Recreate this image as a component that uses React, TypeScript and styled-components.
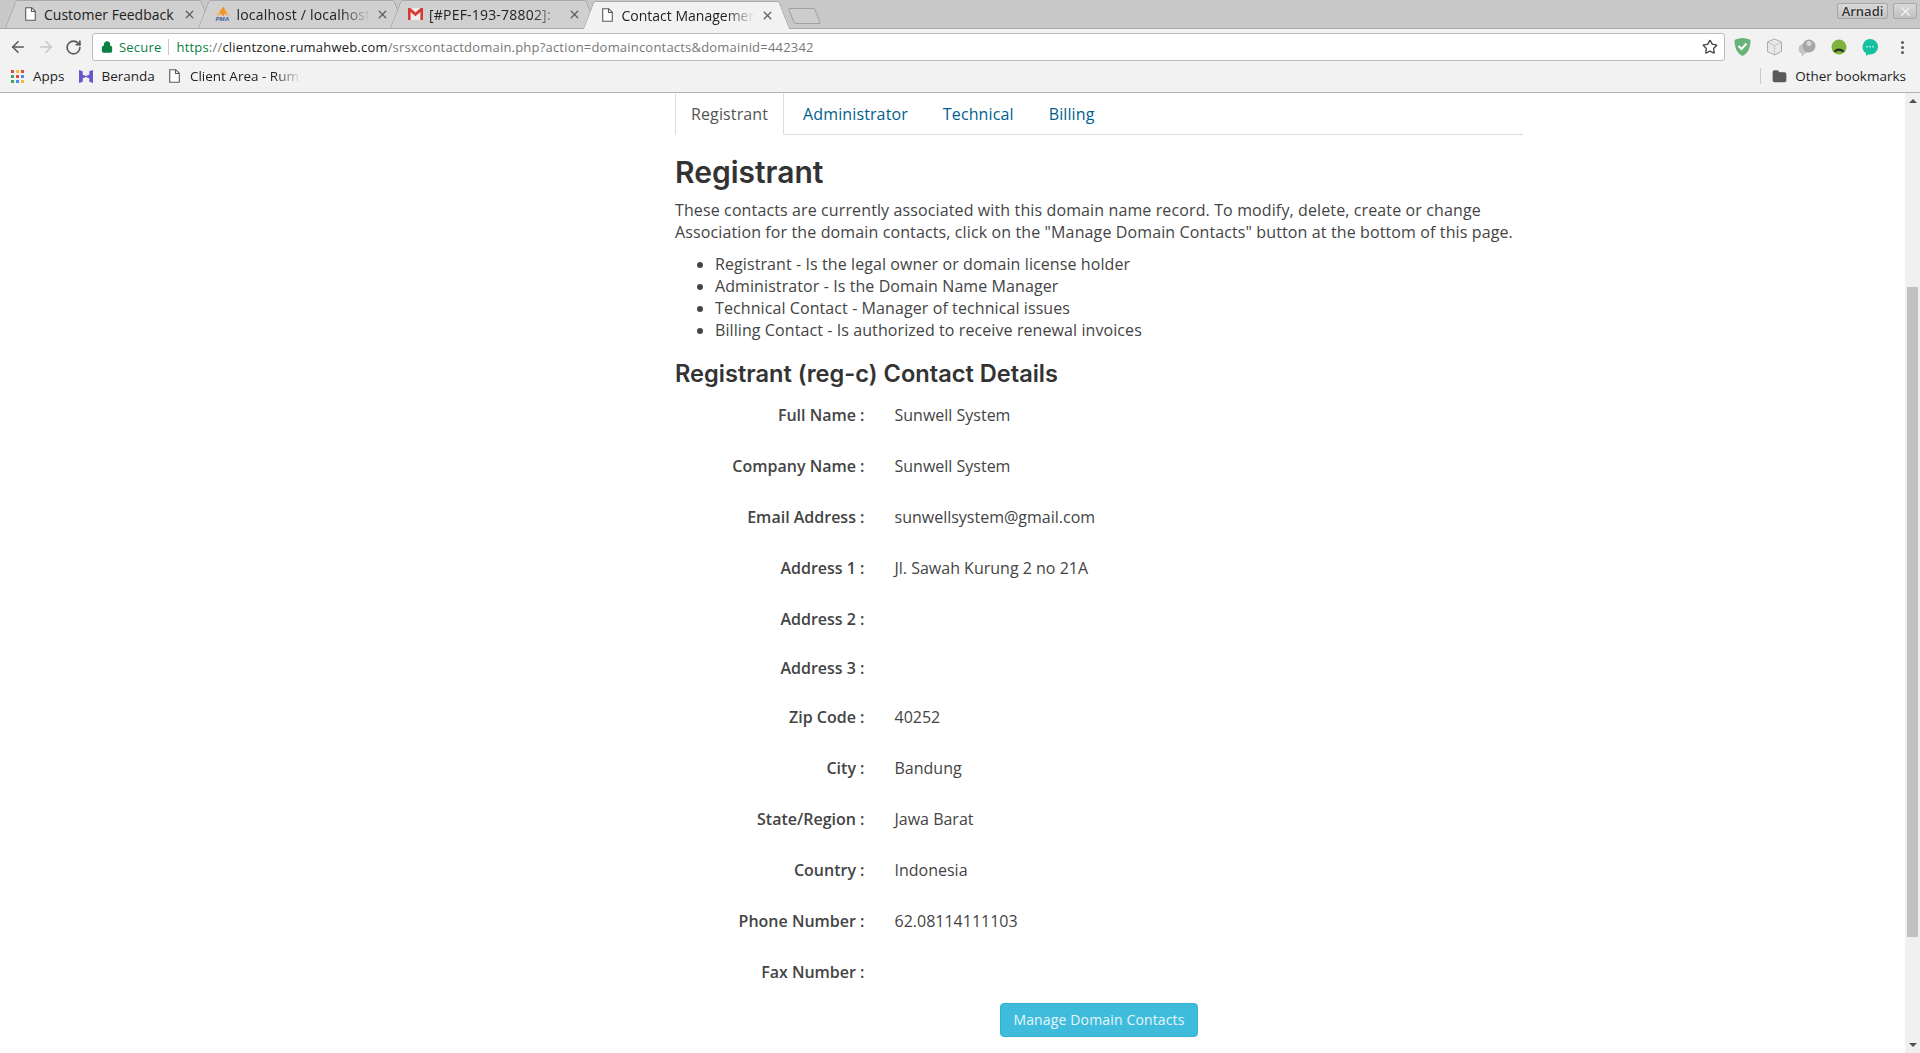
import React from "react";
import styled, { createGlobalStyle } from "styled-components";
import { ArrowLeft, ArrowRight, RotateCw, Star, X, Lock, Folder } from "lucide-react";

const GlobalStyle = createGlobalStyle`
  html, body {
    margin: 0;
    padding: 0;
    height: 100%;
    overflow: hidden;
    background: #ffffff;
  }
  #root {
    height: 100%;
  }
  * {
    box-sizing: border-box;
  }
`;

const FileIcon = () => (
  <svg width="11" height="14" viewBox="0 0 11 14" fill="none">
    <path d="M.7.7h6l3.6 3.6v9H.7z" stroke="#5a5a5a" strokeWidth="1.1" fill="#fff" />
    <path d="M6.5.7v3.8h3.8" stroke="#5a5a5a" strokeWidth="1.1" />
  </svg>
);

const PmaIcon = () => (
  <svg width="17" height="16" viewBox="0 0 17 16">
    <path d="M9 0l1.500 3 3 7-3.500-2.500L9.200 10H8L7 7.500 3.500 10 6 4z" fill="#f0922a" />
    <path d="M5.500 3.500L1 10.500l4.500-2.500zM11.500 3.500l4.500 7-4.500-2.500z" fill="#f8b663" />
    <text x="0.500" y="15.500" fontSize="6.500" fontWeight="700" fontStyle="italic" fill="#3d5f9f" fontFamily="Liberation Sans, sans-serif">PMA</text>
  </svg>
);

const GmailIcon = () => (
  <svg width="15" height="12" viewBox="0 0 15 12">
    <rect width="15" height="12" fill="#eeeeee" />
    <path d="M0 0h2.400L7.500 4.400 12.600 0H15v12h-2.600V4L7.500 8.200 2.600 4v8H0z" fill="#d93a2f" />
  </svg>
);

const AppsIcon = () => {
  const colors = ["#e8453c", "#f9bb2d", "#e8453c", "#3da85a", "#e8453c", "#4a8af4", "#3da85a", "#4a8af4", "#f9bb2d"];
  return (
    <svg width="13" height="13" viewBox="0 0 13 13">
      {colors.map((c, i) => (
        <rect key={i} x={(i % 3) * 5} y={Math.floor(i / 3) * 5} width="3" height="3" fill={c} />
      ))}
    </svg>
  );
};

const BerandaIcon = () => (
  <svg width="14" height="15" viewBox="0 0 15 15">
    <path d="M0 .5l4 1.500v3.500L7.500 7 11 5.500V2l4-1.500v14L11 13V9.500L7.500 8 4 9.500V13l-4 1.500z" fill="#6a55c9" />
  </svg>
);

const ShieldIcon = () => (
  <svg width="17" height="18" viewBox="0 0 17 18">
    <path d="M8.500 0c3 0 6 1 8 2 0 7-2 13-8 16C2.500 15 .5 9 .5 2c2-1 5-2 8-2z" fill="#68b37a" />
    <path d="M4.500 8l3 3 5-5.500" stroke="#fff" strokeWidth="2" fill="none" />
  </svg>
);

const CubeIcon = () => (
  <svg width="17" height="18" viewBox="0 0 17 18">
    <path d="M8.500 1l7 3v9.500l-7 3.500-7-3.500V4z" fill="#e8e8e8" stroke="#aaaaaa" />
    <path d="M1.500 4l7 3.500 7-3.500M8.500 7.500V17" fill="none" stroke="#c4c4c4" />
  </svg>
);

const BalloonIcon = () => (
  <svg width="18" height="17" viewBox="0 0 18 17">
    <circle cx="5.500" cy="10" r="5" fill="#c4c4c4" />
    <circle cx="11" cy="7" r="6.500" fill="#a6a6a6" />
    <circle cx="11" cy="4.500" r="2.500" fill="#d6d6d6" />
    <path d="M3.500 14.500L4 17l2-1.500z" fill="#b4b4b4" />
  </svg>
);

const GreenFaceIcon = () => (
  <svg width="16" height="16" viewBox="0 0 16 16">
    <circle cx="8" cy="8" r="7.500" fill="#7fb23f" />
    <path d="M2.500 13c1-2.500 3-3.500 5.500-3.500s4.500 1 5.500 3.500H11c-.8-.8-1.800-1-3-1s-2.200.2-3 1z" fill="#2d3320" />
  </svg>
);

const ChatIcon = () => (
  <svg width="16" height="17" viewBox="0 0 16 17">
    <path d="M8 0a8 7.700 0 0 1 0 15.400c-.6 0-1.200 0-1.800-.2L4 17v-2.800A7.800 7.800 0 0 1 8 0z" fill="#15bfa0" />
    <circle cx="5" cy="7.800" r=".8" fill="#fff" />
    <circle cx="8" cy="7.800" r=".8" fill="#fff" />
    <circle cx="11" cy="7.800" r=".8" fill="#fff" />
  </svg>
);

const tabs = [
  { title: "Customer Feedback", icon: <FileIcon />, fade: false },
  { title: "localhost / localhost", icon: <PmaIcon />, fade: true },
  { title: "[#PEF-193-78802]:", icon: <GmailIcon />, fade: true },
  { title: "Contact Managemen", icon: <FileIcon />, active: true, fade: true },
];

const contactRows = [
  ["Full Name", "Sunwell System"],
  ["Company Name", "Sunwell System"],
  ["Email Address", "sunwellsystem@gmail.com"],
  ["Address 1", "Jl. Sawah Kurung 2 no 21A"],
  ["Address 2", ""],
  ["Address 3", ""],
  ["Zip Code", "40252"],
  ["City", "Bandung"],
  ["State/Region", "Jawa Barat"],
  ["Country", "Indonesia"],
  ["Phone Number", "62.08114111103"],
  ["Fax Number", ""],
];

export default function App() {
  return (
    <Page>
      <GlobalStyle />
      <BrowserChrome>
        <TabStrip>
          {tabs.map((tab) => (
            <Tab key={tab.title} $active={tab.active}>
              <TabIcon>{tab.icon}</TabIcon>
              <TabTitle $fade={tab.fade} $active={tab.active}>{tab.title}</TabTitle>
              <TabClose>
                <X size={13} strokeWidth={2.4} />
              </TabClose>
            </Tab>
          ))}
          <NewTab />
          <WindowButtons>
            <ProfileButton>Arnadi</ProfileButton>
            <CloseButton>
              <X size={15} strokeWidth={2} />
            </CloseButton>
          </WindowButtons>
        </TabStrip>
        <Toolbar>
          <NavButton>
            <ArrowLeft size={18} strokeWidth={2.2} />
          </NavButton>
          <NavButton $disabled>
            <ArrowRight size={18} strokeWidth={2.2} />
          </NavButton>
          <NavButton>
            <RotateCw size={17} strokeWidth={2.4} />
          </NavButton>
          <Omnibox>
            <SecureBadge>
              <Lock size={12} strokeWidth={2.6} fill="#0b8043" />
              Secure
            </SecureBadge>
            <UrlText>
              <UrlScheme>https</UrlScheme>
              ://
              <UrlHost>clientzone.rumahweb.com</UrlHost>
              /srsxcontactdomain.php?action=domaincontacts&amp;domainid=442342
            </UrlText>
            <Star size={16} strokeWidth={2} color="#444" />
          </Omnibox>
          <Extensions>
            <ShieldIcon />
            <CubeIcon />
            <BalloonIcon />
            <GreenFaceIcon />
            <ChatIcon />
            <Kebab>
              <i />
              <i />
              <i />
            </Kebab>
          </Extensions>
        </Toolbar>
        <BookmarkBar>
          <Bookmark>
            <AppsIcon />
            Apps
          </Bookmark>
          <Bookmark>
            <BerandaIcon />
            Beranda
          </Bookmark>
          <Bookmark $clip>
            <FileIcon />
            <BookmarkLabel>Client Area - Rum</BookmarkLabel>
          </Bookmark>
          <OtherBookmarks>
            <Folder size={15} fill="#5a5a5a" color="#5a5a5a" />
            Other bookmarks
          </OtherBookmarks>
        </BookmarkBar>
      </BrowserChrome>
      <Viewport>
        <Content>
          <NavTabs>
            <NavTab $active>Registrant</NavTab>
            <NavTab>Administrator</NavTab>
            <NavTab>Technical</NavTab>
            <NavTab>Billing</NavTab>
          </NavTabs>
          <Title>Registrant</Title>
          <Intro>
            These contacts are currently associated with this domain name record. To modify, delete, create or change
            Association for the domain contacts, click on the "Manage Domain Contacts" button at the bottom of this page.
          </Intro>
          <RoleList>
            <li>Registrant - Is the legal owner or domain license holder</li>
            <li>Administrator - Is the Domain Name Manager</li>
            <li>Technical Contact - Manager of technical issues</li>
            <li>Billing Contact - Is authorized to receive renewal invoices</li>
          </RoleList>
          <Subtitle>Registrant (reg-c) Contact Details</Subtitle>
          <ContactForm>
            {contactRows.map(([label, value]) => (
              <ContactRow key={label}>
                <ContactLabel>{label} :</ContactLabel>
                {value ? <ContactValue>{value}</ContactValue> : null}
              </ContactRow>
            ))}
          </ContactForm>
          <Actions>
            <ManageButton>Manage Domain Contacts</ManageButton>
          </Actions>
        </Content>
        <Scrollbar>
          <ScrollArrow $dir="up" />
          <ScrollThumb />
          <ScrollArrow $dir="down" />
        </Scrollbar>
      </Viewport>
    </Page>
  );
}

const chromeFont = `"Open Sans", "Noto Sans", sans-serif`;

const Page = styled.div`
  height: 100%;
  display: flex;
  flex-direction: column;
  font-family: "Open Sans", sans-serif;
  color: #444444;
`;

const BrowserChrome = styled.div`
  flex: none;
  height: 93px;
  background: #f2f2f2;
  border-bottom: 1px solid #b4b4b4;
  font-family: ${chromeFont};
`;

const TabStrip = styled.div`
  height: 29px;
  background: #c8c8c8;
  border-bottom: 1px solid #a9a9a9;
  padding-left: 5px;
  display: flex;
  align-items: flex-end;
`;

const Tab = styled.div<{ $active?: boolean }>`
  position: relative;
  z-index: ${(p) => (p.$active ? 2 : 1)};
  width: 207px;
  height: 28px;
  margin-right: -14.5px;
  margin-bottom: ${(p) => (p.$active ? "-1px" : "0")};
  padding: 0 16px 0 17px;
  display: flex;
  align-items: center;
  font-size: 14px;
  color: #222222;

  &::before,
  &::after {
    content: "";
    position: absolute;
    z-index: -1;
    top: 0;
    bottom: 0;
    width: 55%;
    background: ${(p) => (p.$active ? "#f2f2f2" : "#d0d0d0")};
    border-top: 1px solid #a9a9a9;
  }
  &::before {
    left: 0;
    border-left: 1px solid #a0a0a0;
    border-top-left-radius: 2px;
    transform-origin: bottom left;
    transform: skewX(-21deg);
  }
  &::after {
    right: 0;
    border-right: 1px solid #a0a0a0;
    border-top-right-radius: 2px;
    transform-origin: bottom right;
    transform: skewX(21deg);
  }
`;

const TabIcon = styled.span`
  flex: none;
  width: 16px;
  margin-right: 6px;
  display: flex;
  justify-content: center;
  align-items: center;
`;

const TabTitle = styled.span<{ $fade?: boolean; $active?: boolean }>`
  flex: 1;
  min-width: 0;
  overflow: hidden;
  white-space: nowrap;
  ${(p) => (p.$fade ? "mask-image: linear-gradient(to right, #000 78%, transparent 100%);" : "")}
  ${(p) => (p.$fade && !p.$active ? "letter-spacing: 0.2px;" : "")}
`;

const TabClose = styled.span`
  flex: none;
  margin-left: 6px;
  display: flex;
  color: #5f5f5f;
`;

const NewTab = styled.div`
  flex: none;
  width: 27px;
  height: 16px;
  margin: 0 0 4px 16px;
  background: #cdcdcd;
  border: 1px solid #a0a0a0;
  border-radius: 2px;
  transform: skewX(21deg);
`;

const WindowButtons = styled.div`
  margin-left: auto;
  align-self: flex-start;
  display: flex;
  gap: 5px;
  padding: 3px 3px 0 0;
`;

const ProfileButton = styled.div`
  width: 51px;
  height: 16px;
  background: linear-gradient(#d8d8d8, #c0c0c0);
  border: 1px solid #a8a8a8;
  border-radius: 2px;
  font-size: 13px;
  font-weight: 600;
  line-height: 14px;
  text-align: center;
  color: #333333;
  text-shadow: 0 0 2px #ffffff;
`;

const CloseButton = styled.div`
  width: 24px;
  height: 16px;
  background: linear-gradient(#d8d8d8, #c0c0c0);
  border: 1px solid #a8a8a8;
  border-radius: 2px;
  color: #f2f2f2;
  display: flex;
  align-items: center;
  justify-content: center;
`;

const Toolbar = styled.div`
  height: 32px;
  padding: 4px 0 0 8px;
  display: flex;
  align-items: flex-start;
`;

const NavButton = styled.div<{ $disabled?: boolean }>`
  width: 28px;
  height: 28px;
  display: flex;
  align-items: center;
  padding-left: 1px;
  color: ${(p) => (p.$disabled ? "#c8c8c8" : "#5a5a5a")};
`;

const Omnibox = styled.div`
  flex: none;
  width: 1633px;
  height: 28px;
  background: #ffffff;
  border: 1px solid #bcbcbc;
  border-radius: 3px;
  display: flex;
  align-items: center;
  padding: 0 6px 0 8px;
  font-size: 13px;
  letter-spacing: 0.2px;
`;

const SecureBadge = styled.div`
  flex: none;
  display: flex;
  align-items: center;
  gap: 6px;
  padding-right: 7px;
  border-right: 1px solid #c8c8c8;
  margin-right: 7px;
  color: #0b8043;
  line-height: 16px;
`;

const UrlText = styled.div`
  flex: 1;
  color: #777777;
  white-space: nowrap;
`;

const UrlScheme = styled.span`
  color: #0b8043;
`;

const UrlHost = styled.span`
  color: #222222;
`;

const Extensions = styled.div`
  flex: 1;
  display: flex;
  align-items: center;
  height: 28px;
  padding-left: 9px;
  gap: 15px;
`;

const Kebab = styled.div`
  display: flex;
  flex-direction: column;
  gap: 2px;
  margin-left: 8px;

  i {
    display: block;
    width: 3px;
    height: 3px;
    border-radius: 50%;
    background: #5a5a5a;
  }
`;

const BookmarkBar = styled.div`
  height: 31px;
  padding: 0 14px 1px 11px;
  display: flex;
  align-items: center;
  font-size: 13.5px;
  color: #222222;
`;

const Bookmark = styled.div<{ $clip?: boolean }>`
  display: flex;
  align-items: center;
  gap: ${(p) => (p.$clip ? "10px" : "9px")};
  margin-right: 14px;
  ${(p) => (p.$clip ? "width: 133px;" : "")}
`;

const BookmarkLabel = styled.span`
  flex: 1;
  min-width: 0;
  overflow: hidden;
  white-space: nowrap;
  mask-image: linear-gradient(to right, #000 75%, transparent 100%);
`;

const OtherBookmarks = styled.div`
  margin-left: auto;
  height: 16px;
  padding-left: 11px;
  border-left: 1px solid #c8c8c8;
  display: flex;
  align-items: center;
  gap: 8px;
`;

const Viewport = styled.div`
  flex: 1;
  min-height: 0;
  display: flex;
  background: #ffffff;
`;

const Content = styled.main`
  flex: 1;
  min-width: 0;
  padding-left: 675px;
  padding-right: 382px;
  font-size: 16px;
  line-height: 22px;
`;

const NavTabs = styled.div`
  display: flex;
  height: 42px;
  border-bottom: 1px solid #dddddd;
  letter-spacing: 0.12px;
`;

const NavTab = styled.div<{ $active?: boolean }>`
  height: ${(p) => (p.$active ? "42px" : "40px")};
  padding: 9px 15px;
  margin-right: 3px;
  border: 1px solid ${(p) => (p.$active ? "#dddddd" : "transparent")};
  border-top-color: transparent;
  border-bottom-color: ${(p) => (p.$active ? "#ffffff" : "transparent")};
  color: ${(p) => (p.$active ? "#555555" : "#005f8f")};
  background: #ffffff;
`;

const Title = styled.h1`
  margin: 21px 0 10px;
  font-family: Inter, sans-serif;
  font-weight: 600;
  font-size: 30px;
  line-height: 33px;
  color: #333333;
`;

const Intro = styled.p`
  margin: 0 0 10px;
  letter-spacing: 0.12px;
`;

const RoleList = styled.ul`
  margin: 0;
  padding-left: 40px;
  letter-spacing: 0.09px;
`;

const Subtitle = styled.h3`
  margin: 20px 0 10px;
  font-family: Inter, sans-serif;
  font-weight: 600;
  font-size: 23.6px;
  line-height: 26px;
  color: #333333;
`;

const ContactForm = styled.div``;

const ContactRow = styled.div`
  min-height: 34px;
  margin-bottom: 15px;
  display: grid;
  grid-template-columns: 189.5px 1fr;
  column-gap: 30px;
`;

const ContactLabel = styled.label`
  padding-top: 7px;
  text-align: right;
  font-weight: 600;
`;

const ContactValue = styled.div`
  grid-column: 2;
  padding: 7px 0;
`;

const Actions = styled.div`
  display: flex;
  justify-content: center;
`;

const ManageButton = styled.button`
  width: 198px;
  height: 34px;
  padding: 0 0 2px;
  background: #3fbcdb;
  border: 1px solid #2fb2d4;
  border-radius: 4px;
  color: #e6f6fa;
  font-family: "Open Sans", sans-serif;
  font-size: 14px;
  letter-spacing: 0.15px;
`;

const Scrollbar = styled.div`
  flex: none;
  width: 15px;
  background: #f0f0f0;
  display: flex;
  flex-direction: column;
  align-items: center;
`;

const ScrollArrow = styled.div<{ $dir: "up" | "down" }>`
  flex: none;
  width: 0;
  height: 0;
  border-left: 4px solid transparent;
  border-right: 4px solid transparent;
  ${(p) =>
    p.$dir === "up"
      ? "border-bottom: 4px solid #505050; margin-top: 6px;"
      : "border-top: 4px solid #505050; margin-top: 106px;"}
`;

const ScrollThumb = styled.div`
  flex: none;
  width: 11px;
  height: 650px;
  margin-top: 184px;
  background: #c1c1c1;
`;
